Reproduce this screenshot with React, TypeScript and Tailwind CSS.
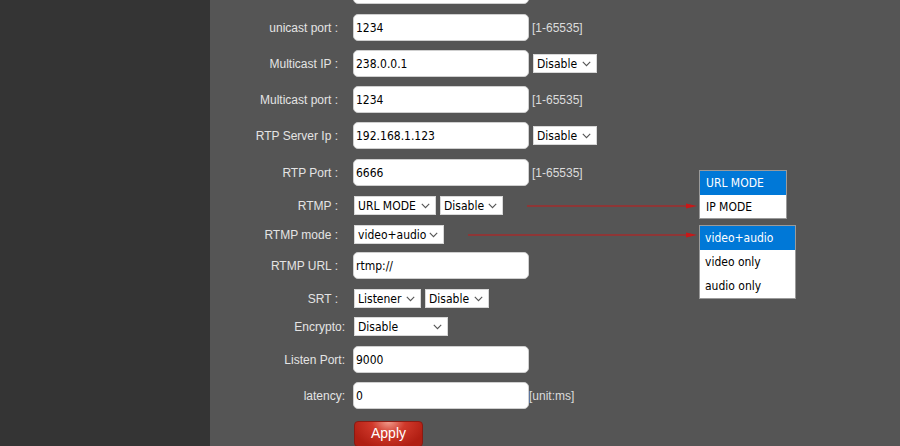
import React from "react";

const ctl = "font-['DejaVu_Sans_Condensed','DejaVu_Sans','Liberation_Sans',sans-serif] text-[12px] text-black";

function Chevron() {
  return (
    <svg width="9" height="6" viewBox="0 0 9 6" className="shrink-0">
      <path d="M0.8 0.8 L4.5 4.6 L8.2 0.8" fill="none" stroke="#555" strokeWidth="1.1" />
    </svg>
  );
}

function Sel({ w, text }: { w: string; text: string }) {
  return (
    <div className={`${w} h-[19px] bg-white border border-[#d8d8d8] flex items-center justify-between pl-[3px] pr-[5px] ${ctl}`}>
      <span className="leading-none">{text}</span>
      <Chevron />
    </div>
  );
}

function Inp({ v }: { v: string }) {
  return (
    <div className={`w-[176px] h-[27px] bg-white rounded-[5px] border border-[#cfcfcf] flex items-center pl-[2px] ${ctl}`}>
      {v}
    </div>
  );
}

function Row({
  label,
  spaced = true,
  h,
  mt,
  children,
}: {
  label: string;
  spaced?: boolean;
  h: string;
  mt: string;
  children?: React.ReactNode;
}) {
  return (
    <div className={`flex items-center ${h} ${mt}`}>
      <div
        className={`w-[135px] text-right text-[12px] text-[#e4e4e4] font-['Liberation_Sans',Arial,sans-serif] ${
          spaced ? "pr-[7px]" : ""
        }`}
      >
        {label}
      </div>
      <div className="ml-[8px] flex items-center gap-[4px]">{children}</div>
    </div>
  );
}

const hint = "text-[12px] text-[#dcdcdc] font-['Liberation_Sans',Arial,sans-serif]";

export default function App() {
  return (
    <div className="relative flex w-[900px] h-[446px] overflow-hidden">
      <div className="w-[210px] h-full bg-[#343434]" />
      <div className="flex-1 h-full bg-[#555555]">
        <div className="flex flex-col">
          <Row label="" h="h-[27px]" mt="-mt-[23px]">
            <Inp v="" />
            <Sel w="w-[64px]" text="" />
          </Row>
          <Row label="unicast port :" h="h-[27px]" mt="mt-[10px]">
            <Inp v="1234" />
            <span className={`${hint} -ml-[1px]`}>[1-65535]</span>
          </Row>
          <Row label="Multicast IP :" h="h-[27px]" mt="mt-[9px]">
            <Inp v="238.0.0.1" />
            <Sel w="w-[64px]" text="Disable" />
          </Row>
          <Row label="Multicast port :" h="h-[27px]" mt="mt-[9px]">
            <Inp v="1234" />
            <span className={`${hint} -ml-[1px]`}>[1-65535]</span>
          </Row>
          <Row label="RTP Server Ip :" h="h-[27px]" mt="mt-[9px]">
            <Inp v="192.168.1.123" />
            <Sel w="w-[64px]" text="Disable" />
          </Row>
          <Row label="RTP Port :" h="h-[27px]" mt="mt-[10px]">
            <Inp v="6666" />
            <span className={`${hint} -ml-[1px]`}>[1-65535]</span>
          </Row>
          <Row label="RTMP :" h="h-[19px]" mt="mt-[10px]">
            <div className="ml-[1px] flex gap-[4px]">
              <Sel w="w-[82px]" text="URL MODE" />
              <Sel w="w-[63px]" text="Disable" />
            </div>
          </Row>
          <Row label="RTMP mode :" h="h-[19px]" mt="mt-[10px]">
            <div className="ml-[1px]">
              <Sel w="w-[90px]" text="video+audio" />
            </div>
          </Row>
          <Row label="RTMP URL :" h="h-[27px]" mt="mt-[8px]">
            <Inp v="rtmp://" />
          </Row>
          <Row label="SRT :" h="h-[19px]" mt="mt-[10px]">
            <div className="ml-[1px] flex gap-[4px]">
              <Sel w="w-[67px]" text="Listener" />
              <Sel w="w-[64px]" text="Disable" />
            </div>
          </Row>
          <Row label="Encrypto:" spaced={false} h="h-[19px]" mt="mt-[9px]">
            <div className="ml-[1px]">
              <Sel w="w-[94px]" text="Disable" />
            </div>
          </Row>
          <Row label="Listen Port:" spaced={false} h="h-[27px]" mt="mt-[10px]">
            <Inp v="9000" />
          </Row>
          <Row label="latency:" spaced={false} h="h-[27px]" mt="mt-[9px]">
            <Inp v="0" />
            <span className={`${hint} -ml-[4px]`}>[unit:ms]</span>
          </Row>
          <Row label="" spaced={false} h="h-[27px]" mt="mt-[11px]">
            <button className="ml-[1px] w-[69px] h-[26px] rounded-[4px] border border-[#8a1a12] bg-[radial-gradient(ellipse_at_50%_0%,#f09a8a_0%,#d0392b_35%,#b01e12_80%)] text-white text-[14px] font-['Liberation_Sans',Arial,sans-serif] flex items-center justify-center">
              Apply
            </button>
          </Row>
        </div>
      </div>

      {/* annotation arrows */}
      <svg className="absolute left-0 top-0 pointer-events-none" width="900" height="446">
        <line x1="527" y1="206" x2="690" y2="206" stroke="#c81818" strokeWidth="1.2" />
        <polygon points="697,206 686,203.5 686,208.5" fill="#c81818" />
        <line x1="468" y1="235" x2="690" y2="235" stroke="#c81818" strokeWidth="1.2" />
        <polygon points="697,235 686,232.5 686,237.5" fill="#c81818" />
      </svg>

      {/* open dropdown lists */}
      <div className={`absolute left-[699px] top-[170px] w-[88px] bg-white border border-[#9a9a9a] ${ctl}`}>
        <div className="h-[24px] bg-[#0078d7] text-white flex items-center pl-[6px]">URL MODE</div>
        <div className="h-[23px] flex items-center pl-[6px]">IP MODE</div>
      </div>
      <div className={`absolute left-[699px] top-[225px] w-[97px] bg-white border border-[#9a9a9a] ${ctl}`}>
        <div className="h-[24px] bg-[#0078d7] text-white flex items-center pl-[5px]">video+audio</div>
        <div className="h-[24px] flex items-center pl-[5px]">video only</div>
        <div className="h-[24px] flex items-center pl-[5px]">audio only</div>
      </div>
    </div>
  );
}
